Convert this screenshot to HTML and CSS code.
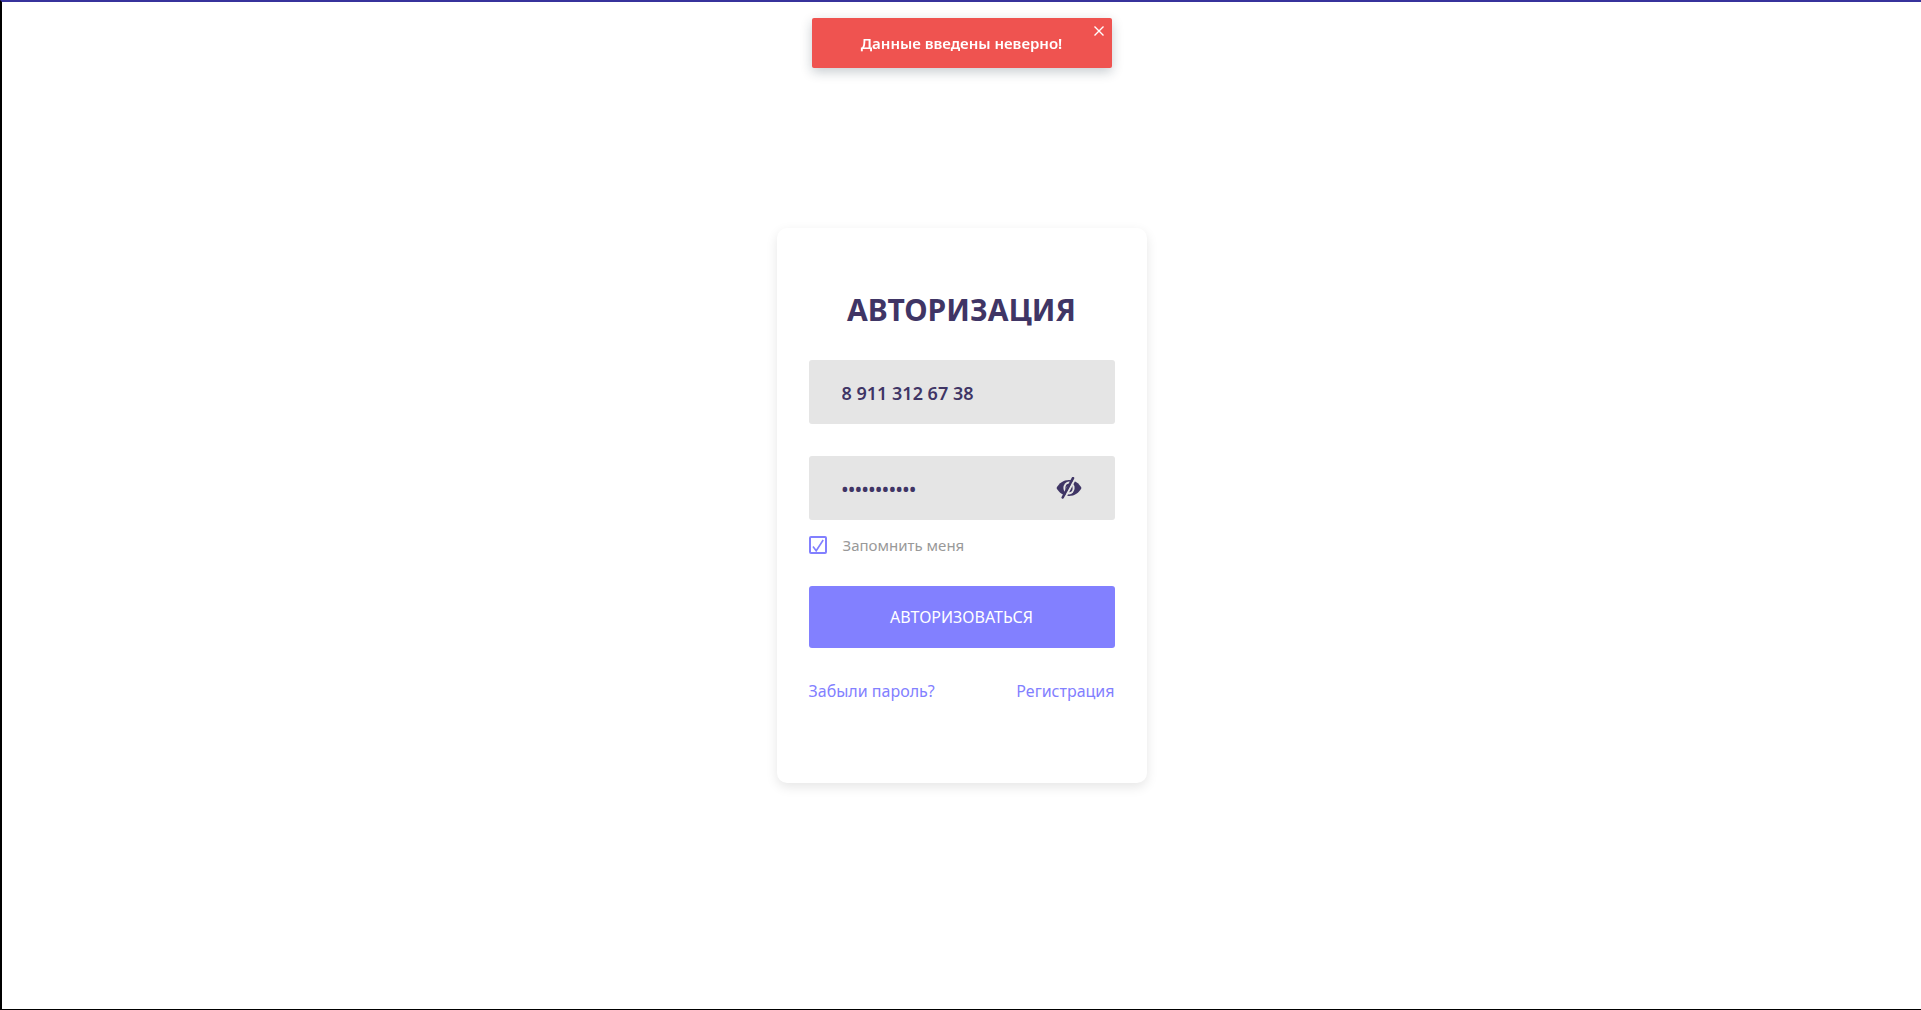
FILE: index.html
```html
<!DOCTYPE html>
<html lang="ru">
<head>
  <meta charset="utf-8">
  <meta name="viewport" content="width=device-width, initial-scale=1">
  <title>Авторизация</title>
  <link rel="stylesheet" href="styles.css">
</head>
<body class="page">
  <div class="toast" role="alert">
    <p class="toast-text">Данные введены неверно!</p>
    <button class="toast-close" type="button" aria-label="Закрыть">
      <svg width="10" height="10" viewBox="0 0 10 10" aria-hidden="true"><path d="M.5.5l9 9M9.500.5l-9 9" fill="none" stroke="currentColor" stroke-width="1.4"/></svg>
    </button>
  </div>
  <main class="main">
    <form class="card">
      <h1 class="title">АВТОРИЗАЦИЯ</h1>
      <input class="field" type="tel" value="8 911 312 67 38" aria-label="Телефон">
      <div class="password">
        <input class="field field-password" type="password" value="89113126738" aria-label="Пароль">
        <button class="eye" type="button" aria-label="Показать пароль">
          <svg width="26" height="22" viewBox="0 0 26 22" aria-hidden="true">
            <path d="M.5 11C3 6.200 7.500 3 13 3s10 3.200 12.500 8C23 15.800 18.500 19 13 19S3 15.800.5 11z" fill="#3f3565"/>
            <ellipse cx="13" cy="11" rx="5.600" ry="6.400" fill="#e5e5e5"/>
            <ellipse cx="13" cy="11" rx="3.600" ry="4.300" fill="#3f3565"/>
            <path d="M12.800 9c-1.400.5-2 1.600-2 3" fill="none" stroke="#e5e5e5" stroke-width="1.300"/>
            <path d="M19.300 1.200L8.600 21.500" stroke="#e5e5e5" stroke-width="2.200"/>
            <path d="M17 1.200L6.700 20.500" stroke="#3f3565" stroke-width="2.600" stroke-linecap="round"/>
          </svg>
        </button>
      </div>
      <label class="remember">
        <span class="check">
          <input class="check-input" type="checkbox" checked>
          <svg class="check-mark" width="18" height="18" viewBox="0 0 18 18" aria-hidden="true"><path d="M4 10.500l3.200 4.300L14.200 4" fill="none" stroke="currentColor" stroke-width="1.600"/></svg>
        </span>
        Запомнить меня
      </label>
      <button class="submit" type="submit">АВТОРИЗОВАТЬСЯ</button>
      <nav class="links">
        <a class="link" href="#forgot">Забыли пароль?</a>
        <a class="link" href="#register">Регистрация</a>
      </nav>
    </form>
  </main>
</body>
</html>
```
FILE: styles.css
```css
*, *::before, *::after { box-sizing: border-box; }

.page {
  display: flex;
  min-height: 100vh;
  margin: 0;
  border: solid #000;
  border-width: 2px 0 1px 2px;
  border-top-color: #37339c;
  background: #fff;
  color: #3f3565;
  font-family: "Noto Sans", sans-serif;
  font-size: 16px;
  line-height: 22px;
}

.toast {
  position: fixed;
  top: 18px;
  left: 2px;
  right: 0;
  display: flex;
  align-items: center;
  justify-content: center;
  width: 300px;
  height: 50px;
  margin: 0 auto;
  border-radius: 2px;
  background: #ef5350;
  box-shadow: 0 4px 12px rgba(20, 40, 60, 0.24);
  color: #fff;
}

.toast-text { margin: 0; font-weight: 600; font-size: 15px; }

.toast-close {
  position: absolute;
  top: 8px;
  right: 8px;
  display: flex;
  padding: 0;
  border: 0;
  background: none;
  color: inherit;
}

.main {
  display: flex;
  flex: 1;
  align-items: center;
  justify-content: center;
}

.card {
  display: flex;
  flex-direction: column;
  width: 370px;
  padding: 62px 32px 81px;
  border-radius: 10px;
  background: #fff;
  box-shadow: 0 4px 12px rgba(0, 0, 0, 0.1);
}

.title {
  margin: 0 0 30px;
  font-size: 30px;
  font-weight: 700;
  line-height: 40px;
  text-align: center;
}

.field {
  width: 100%;
  height: 64px;
  padding: 2px 33px 0;
  border: 0;
  border-radius: 3px;
  background: #e5e5e5;
  color: inherit;
  font: 600 18px "Noto Sans", sans-serif;
}

.password { position: relative; margin: 32px 0 16px; }

.field-password { display: block; padding-right: 64px; }

.eye {
  position: absolute;
  top: 21px;
  right: 33px;
  display: flex;
  padding: 0;
  border: 0;
  background: none;
}

.remember {
  display: flex;
  align-items: center;
  gap: 16px;
  height: 18px;
  color: #999;
  font-size: 15px;
}

.check { position: relative; display: flex; color: #8280ff; }

.check-input {
  appearance: none;
  width: 18px;
  height: 18px;
  margin: 0;
  border: 2px solid #8280ff;
  border-radius: 2px;
}

.check-mark { position: absolute; inset: 0; pointer-events: none; }

.submit {
  height: 62px;
  margin: 32px 0;
  padding: 0;
  border: 0;
  border-radius: 3px;
  background: #8280ff;
  color: #fff;
  font: 16px "Noto Sans", sans-serif;
}

.links { display: flex; justify-content: space-between; }

.link { color: #8280ff; text-decoration: none; }
```
